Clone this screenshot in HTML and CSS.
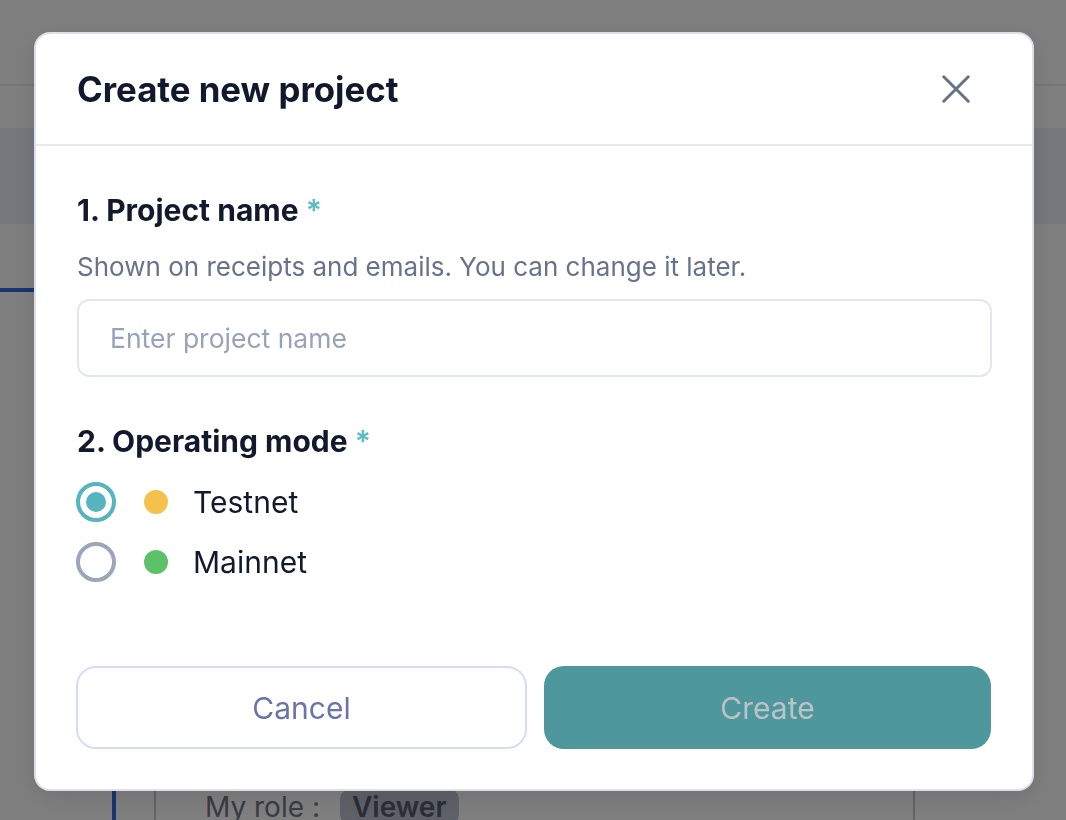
FILE: index.html
```html
<!DOCTYPE html>
<html lang="en">
<head>
<meta charset="utf-8">
<title>Create new project</title>
<link rel="stylesheet" href="styles.css">
</head>
<body>
<div class="page">
  <div class="topbar"></div>
  <div class="band"></div>
  <div class="tabs"><div class="tab"></div></div>
  <div class="main">
    <div class="rail"></div>
    <div class="panel">
      <div class="role-row"><span class="role-label">My role :</span><span class="role-badge">Viewer</span></div>
    </div>
  </div>
</div>

<div class="overlay"></div>

<div class="modal" role="dialog" aria-labelledby="modal-title">
  <div class="modal-header">
    <h2 id="modal-title" class="modal-title">Create new project</h2>
    <button class="close-btn" aria-label="Close">
      <svg width="32" height="32" viewBox="0 0 32 32" fill="none" stroke="#667387" stroke-width="3.4" stroke-linecap="round">
        <path d="M2 2 L30 30 M30 2 L2 30"/>
      </svg>
    </button>
  </div>
  <div class="modal-body">
    <div class="field-title">1. Project name <span class="req">*</span></div>
    <div class="field-desc">Shown on receipts and emails. You can change it later.</div>
    <input class="text-input" type="text" placeholder="Enter project name">

    <div class="field-title second">2. Operating mode <span class="req">*</span></div>
    <div class="radio-list">
      <label class="radio-row">
        <span class="radio checked"><span class="radio-dot"></span></span>
        <span class="status-dot yellow"></span>
        <span class="radio-text">Testnet</span>
      </label>
      <label class="radio-row">
        <span class="radio"></span>
        <span class="status-dot green"></span>
        <span class="radio-text">Mainnet</span>
      </label>
    </div>

    <div class="actions">
      <button class="btn btn-cancel">Cancel</button>
      <button class="btn btn-create">Create</button>
    </div>
  </div>
</div>
</body>
</html>
```
FILE: styles.css
```css
* { box-sizing: border-box; }
html, body { margin: 0; padding: 0; }
body {
  width: 1066px;
  height: 820px;
  overflow: hidden;
  background: #ffffff;
  font-family: Inter, "Noto Sans", sans-serif;
}

/* ---------- background page ---------- */
.page { width: 1066px; }
.topbar { height: 86px; border-bottom: 2px solid #ececec; }
.band { height: 96px; margin-top: 42px; background: #eef0fc; }
.tabs { height: 68px; display: flex; align-items: flex-end; }
.tab { width: 200px; height: 4px; background: #3468e0; }
.main { display: flex; padding-left: 112px; }
.rail { width: 42px; border-left: 4px solid #3468e0; }
.panel {
  width: 761px;
  height: 540px;
  border-left: 2px solid #c8c8cc;
  border-right: 2px solid #c8c8cc;
  padding: 497px 0 0 49px;
}
.role-row { display: flex; align-items: center; gap: 20px; height: 36px; }
.role-label { font-size: 28px; color: #727888; }
.role-badge {
  font-size: 28px;
  font-weight: 600;
  color: #565c6c;
  background: #bec2d2;
  border-radius: 12px;
  padding: 2px 12px;
}

/* ---------- overlay ---------- */
.overlay {
  position: fixed;
  inset: 0;
  background: rgba(0, 0, 0, 0.5);
}

/* ---------- modal ---------- */
.modal {
  position: fixed;
  top: 32px;
  left: 34px;
  width: 1000px;
  height: 759px;
  background: #ffffff;
  border: 2px solid #dde0ec;
  border-radius: 16px;
  box-shadow: 0 6px 24px rgba(0, 0, 0, 0.12);
}
.modal-header {
  height: 112px;
  border-bottom: 2px solid #e8e9ee;
  display: flex;
  align-items: center;
  justify-content: space-between;
  padding: 0 60px 0 41px;
}
.modal-title {
  margin: 0;
  font-size: 34.8px;
  font-weight: 700;
  color: #111a2c;
}
.close-btn {
  border: 0;
  background: none;
  padding: 0;
  width: 32px;
  height: 32px;
  display: flex;
  align-items: center;
  justify-content: center;
}
.close-btn svg { width: 28px; height: 28px; }

.modal-body { padding: 46px 40px 0 40px; }
.field-title {
  font-size: 30px;
  line-height: 36px;
  font-weight: 700;
  color: #111a2c;
  padding-left: 1px;
}
.field-title.second { margin-top: 46px; }
.req { color: #5bbcc2; font-weight: 600; }
.field-desc {
  margin-top: 23px;
  font-size: 26px;
  line-height: 32px;
  color: #66738a;
  padding-left: 1px;
}
.text-input {
  display: block;
  margin-top: 16px;
  width: 915px;
  margin-left: 1px;
  height: 78px;
  border: 2px solid #e3e7ee;
  border-radius: 12px;
  padding: 0 31px;
  font-family: Inter, "Noto Sans", sans-serif;
  font-size: 26.5px;
  color: #111a2c;
  background: #fff;
  outline: none;
}
.text-input::placeholder { color: #97a3b8; }

.radio-list { margin-top: 23px; display: flex; flex-direction: column; gap: 20px; }
.radio-row { display: flex; align-items: center; height: 40px; }
.radio {
  width: 40px;
  height: 40px;
  border-radius: 50%;
  border: 4px solid #9ba6b9;
  display: flex;
  align-items: center;
  justify-content: center;
  flex-shrink: 0;
}
.radio.checked { border-color: #55b4bc; }
.radio-dot { width: 20px; height: 20px; border-radius: 50%; background: #55b4bc; }
.status-dot { width: 24px; height: 24px; border-radius: 50%; margin-left: 28px; }
.status-dot.yellow { background: #f3c14c; }
.status-dot.green { background: #5cc26a; }
.radio-text { margin-left: 25px; font-size: 30px; color: #111a2c; }

.actions { margin-top: 84px; display: flex; gap: 17px; }
.btn {
  height: 83px;
  border-radius: 20px;
  font-family: Inter, "Noto Sans", sans-serif;
  font-size: 30px;
}
.btn-cancel {
  width: 451px;
  background: #fff;
  border: 2px solid #d6dcf4;
  color: #6a74a8;
}
.btn-create {
  width: 447px;
  background: #4e979c;
  border: 0;
  color: #bcc3c7;
}
```
